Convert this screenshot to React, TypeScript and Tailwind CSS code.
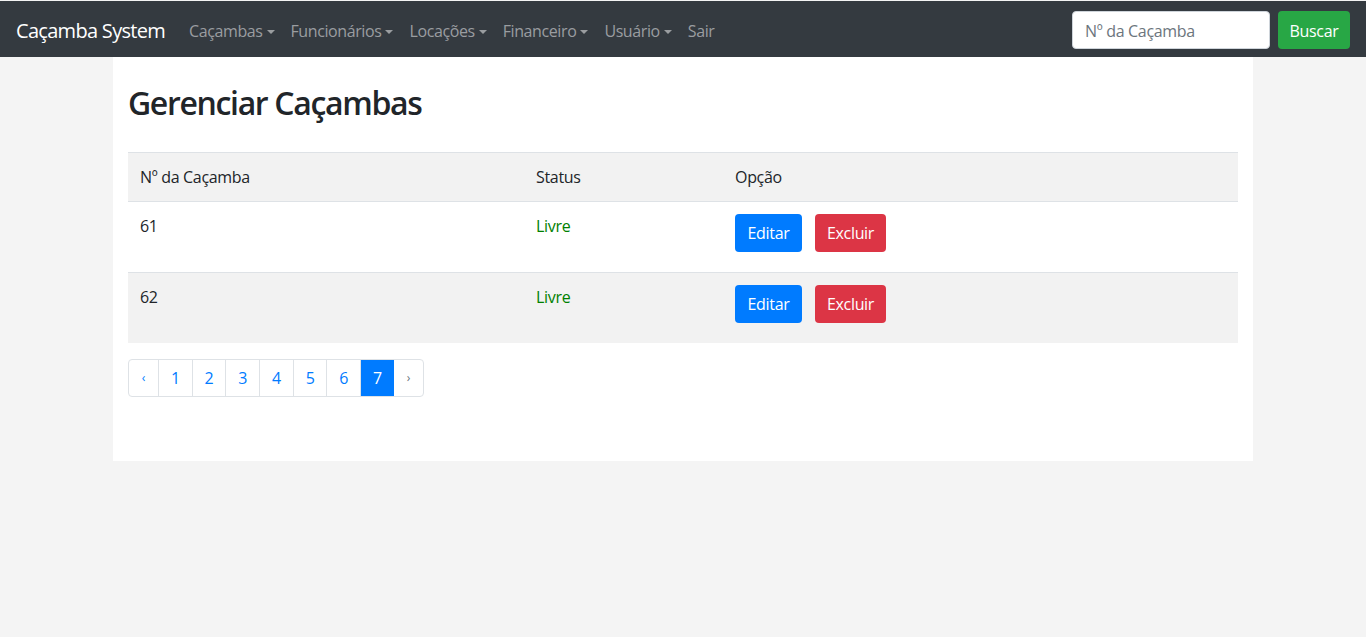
import React from 'react';

const font = "font-['Open_Sans','Noto_Sans',sans-serif] tracking-[-0.02em]";

function Caret() {
  return (
    <span className="ml-[4px] inline-block align-[3px] border-x-[4.8px] border-t-[4.8px] border-x-transparent border-t-current" />
  );
}

const menu = [
  { label: 'Caçambas', drop: true },
  { label: 'Funcionários', drop: true },
  { label: 'Locações', drop: true },
  { label: 'Financeiro', drop: true },
  { label: 'Usuário', drop: true },
  { label: 'Sair', drop: false },
];

const rows = [
  { id: '61', status: 'Livre' },
  { id: '62', status: 'Livre' },
];

export default function App() {
  return (
    <div className={`min-h-screen bg-[#f4f4f4] pt-px text-[#212529] ${font}`}>
      {/* NAVBAR */}
      <nav className="flex h-14 items-center bg-[#343a40] px-4">
        <span className="mr-4 mt-[3px] text-[20px] leading-[30px] tracking-[-0.035em] text-white">Caçamba System</span>
        <div className="mt-[3px] flex items-center">
          {menu.map((m) => (
            <span key={m.label} className="px-2 text-[16px] leading-6 tracking-[-0.025em] text-[#9a9da0]">
              {m.label}
              {m.drop && <Caret />}
            </span>
          ))}
        </div>
        <div className="ml-auto mt-[2px] flex items-center gap-2">
          <input
            placeholder="Nº da Caçamba"
            className="h-[38px] w-[198px] rounded border border-[#ced4da] bg-white px-3 pt-px text-[16px] text-[#495057] placeholder:text-[#6c757d] outline-none"
          />
          <button className="h-[38px] w-[72px] rounded bg-[#28a745] pt-px text-[16px] text-white">Buscar</button>
        </div>
      </nav>

      {/* CONTENT */}
      <div className="mx-auto w-[1140px] bg-white px-[15px] pb-16 pt-[27px]">
        <h2 className="text-[32px] font-semibold leading-[38px] tracking-[-0.042em]">Gerenciar Caçambas</h2>

        <table className="mt-[30px] w-full border-collapse text-[16px]">
          <thead>
            <tr className="h-[49px] border-y border-[#dee2e6] bg-[#f2f2f2] text-left">
              <th className="w-[396px] px-3 font-normal">Nº da Caçamba</th>
              <th className="w-[199px] px-3 font-normal">Status</th>
              <th className="px-3 font-normal">Opção</th>
            </tr>
          </thead>
          <tbody>
            {rows.map((r, i) => (
              <tr
                key={r.id}
                className={`align-top ${i > 0 ? 'h-[70px] border-t border-[#dee2e6] bg-[#f2f2f2]' : 'h-[71px]'}`}
              >
                <td className="px-3 pt-3 leading-6">{r.id}</td>
                <td className="px-3 pt-3 leading-6 text-[#008000]">{r.status}</td>
                <td className="px-3 pt-3">
                  <div className="flex gap-[13px]">
                    <button className="h-[38px] w-[67px] rounded bg-[#007bff] text-white">Editar</button>
                    <button className="h-[38px] w-[71px] rounded bg-[#dc3545] text-white">Excluir</button>
                  </div>
                </td>
              </tr>
            ))}
          </tbody>
        </table>

        {/* PAGINATION */}
        <div className="mt-4 flex">
          <div className="flex h-[38px] overflow-hidden rounded border border-[#dee2e6] text-[16px]">
            <span className="flex w-[29px] items-center justify-center text-[12px] text-[#007bff]">‹</span>
            {['1', '2', '3', '4', '5', '6', '7'].map((p) => (
              <span
                key={p}
                className={`flex w-[33.7px] items-center justify-center border-l border-[#dee2e6] ${
                  p === '7' ? 'border-[#007bff] bg-[#007bff] text-white' : 'text-[#007bff]'
                }`}
              >
                {p}
              </span>
            ))}
            <span className="flex w-[29px] items-center justify-center text-[12px] text-[#6c757d]">›</span>
          </div>
        </div>
      </div>
    </div>
  );
}
